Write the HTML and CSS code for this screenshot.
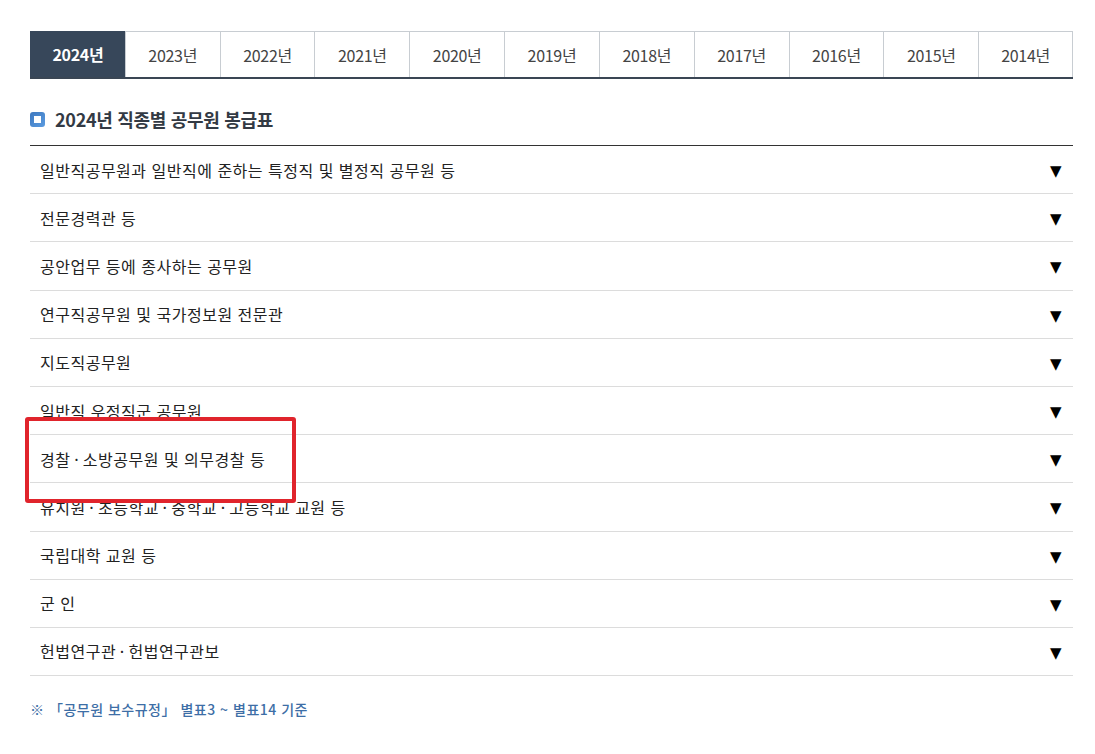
FILE: index.html
```html
<!DOCTYPE html>
<html lang="ko">
<head>
<meta charset="utf-8">
<link rel="stylesheet" href="styles.css">
</head>
<body>
<div class="page">
  <ul class="tabs">
    <li class="tab active">2024년</li>
    <li class="tab">2023년</li>
    <li class="tab">2022년</li>
    <li class="tab">2021년</li>
    <li class="tab">2020년</li>
    <li class="tab">2019년</li>
    <li class="tab">2018년</li>
    <li class="tab">2017년</li>
    <li class="tab">2016년</li>
    <li class="tab">2015년</li>
    <li class="tab">2014년</li>
  </ul>
  <h2 class="title"><span class="title-icon"></span>2024년 직종별 공무원 봉급표</h2>
  <ul class="list">
    <li class="row"><span>일반직공무원과 일반직에 준하는 특정직 및 별정직 공무원 등</span><span class="arrow">▼</span></li>
    <li class="row"><span>전문경력관 등</span><span class="arrow">▼</span></li>
    <li class="row"><span>공안업무 등에 종사하는 공무원</span><span class="arrow">▼</span></li>
    <li class="row"><span>연구직공무원 및 국가정보원 전문관</span><span class="arrow">▼</span></li>
    <li class="row"><span>지도직공무원</span><span class="arrow">▼</span></li>
    <li class="row"><span>일반직 우정직군 공무원</span><span class="arrow">▼</span></li>
    <li class="row"><span>경찰&thinsp;·&thinsp;소방공무원 및 의무경찰 등</span><span class="arrow">▼</span></li>
    <li class="row"><span>유치원&thinsp;·&thinsp;초등학교&thinsp;·&thinsp;중학교&thinsp;·&thinsp;고등학교 교원 등</span><span class="arrow">▼</span></li>
    <li class="row"><span>국립대학 교원 등</span><span class="arrow">▼</span></li>
    <li class="row"><span>군 인</span><span class="arrow">▼</span></li>
    <li class="row"><span>헌법연구관&thinsp;·&thinsp;헌법연구관보</span><span class="arrow">▼</span></li>
  </ul>
  <p class="note">※ 「공무원 보수규정」 별표3 ~ 별표14 기준</p>
</div>
<div class="highlight"></div>
</body>
</html>
```

FILE: styles.css
```css
* { box-sizing: border-box; }
html, body { margin: 0; padding: 0; background: #fff; }
body {
  font-family: "Noto Sans CJK KR", "Noto Sans", sans-serif;
  color: #222;
  position: relative;
  width: 1095px;
  height: 754px;
  overflow: hidden;
}
.page {
  padding: 31px 22px 0 30px;
}
.tabs {
  list-style: none;
  margin: 0;
  padding: 0;
  display: grid;
  grid-template-columns: repeat(11, 1fr);
  border-top: 1px solid #c8cdd2;
  border-bottom: 2px solid #3a4654;
  height: 48px;
}
.tab {
  display: flex;
  align-items: center;
  justify-content: center;
  font-size: 16px;
  color: #444;
  border-left: 1px solid #c8cdd2;
  letter-spacing: -0.3px;
}
.tab:last-child { border-right: 1px solid #c8cdd2; }
.tab.active {
  background: #37475a;
  color: #fff;
  font-weight: 700;
  border-left-color: #37475a;
  margin-top: -1px;
}
.title {
  margin: 0;
  height: 67px;
  display: flex;
  align-items: center;
  gap: 10px;
  font-size: 18px;
  font-weight: 700;
  color: #333a44;
  padding-top: 14px;
  border-bottom: 1px solid #333;
  letter-spacing: -0.3px;
}
.title-icon {
  width: 15px;
  height: 15px;
  border-radius: 3px;
  background: linear-gradient(135deg, #3d78bf, #5b9be0);
  position: relative;
  flex: none;
}
.title-icon::after {
  content: "";
  position: absolute;
  left: 4px;
  top: 4px;
  width: 7px;
  height: 7px;
  background: #fff;
}
.list {
  list-style: none;
  margin: 0;
  padding: 0;
}
.row {
  height: 48.2px;
  border-bottom: 1px solid #dcdcdc;
  display: flex;
  align-items: center;
  justify-content: space-between;
  padding: 0 11px 0 10px;
  font-size: 16px;
  color: #222;
  letter-spacing: 0.5px;
}
.arrow {
  font-family: "DejaVu Sans", sans-serif;
  font-size: 15px;
  color: #000;
  padding-top: 3px;
}
.note {
  margin: 23px 0 0 0;
  font-size: 14px;
  font-weight: 500;
  color: #3d6ea6;
  letter-spacing: 0.5px;
}
.highlight {
  position: absolute;
  left: 25px;
  top: 417px;
  width: 271px;
  height: 86px;
  border: 4px solid #e0242c;
  border-radius: 3px;
}
```
